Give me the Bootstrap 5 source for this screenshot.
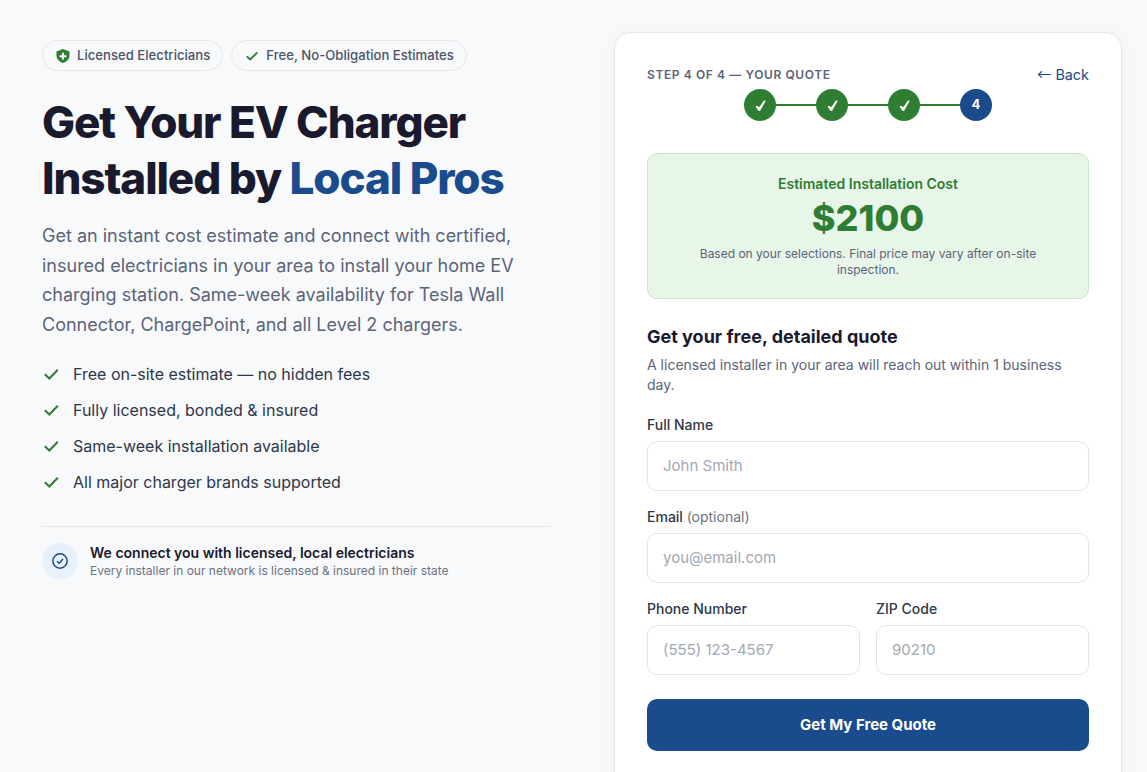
<!DOCTYPE html>
<html lang="en">

<head>
    <meta charset="UTF-8">
    <meta name="viewport" content="width=device-width, initial-scale=1.0">
    <title>EV Charger Installation Quote</title>
    <link rel="stylesheet" href="https://cdn.jsdelivr.net/npm/bootstrap@5.3.0/dist/css/bootstrap.min.css">
    <style>
        body {
            font-family: Inter, "Liberation Sans", sans-serif;
            background: #f8f9fb;
            color: #1a1a2e;
            height: 772px;
            overflow: hidden;
        }

        .page-wrap {
            display: grid;
            grid-template-columns: 508px 508px;
            gap: 64px;
            padding: 32px 25px 0 42px;
            align-items: start;
        }

        .left-col {
            padding-top: 8px;
        }

        .trust-pill {
            display: inline-flex;
            align-items: center;
            gap: 6px;
            height: 31px;
            padding: 0 12px;
            background: #f8f9fb;
            border: 1px solid #e5e7eb;
            border-radius: 16px;
            font-size: 13.12px;
            font-weight: 500;
            letter-spacing: .015px;
            color: #4a5568;
        }

        .hero-title {
            margin: 23px 0 15px;
            font-size: 44px;
            font-weight: 800;
            line-height: 56px;
            letter-spacing: -1.1px;
            color: #1a1a2e;
        }

        .hero-title span {
            color: #1a4b8c;
        }

        .hero-text {
            margin-bottom: 22px;
            font-size: 18px;
            line-height: 29.7px;
            color: #5a6478;
        }

        .check-list {
            gap: 12px;
            margin-bottom: 32px;
            font-size: 16px;
            line-height: 24px;
            color: #2d3748;
        }

        .check-list li {
            gap: 13px;
        }

        .network-row {
            gap: 12px;
            padding-top: 16px;
            border-top: 1px solid #e5e7eb;
        }

        .network-icon {
            width: 36px;
            height: 36px;
            border-radius: 50%;
            background: #e8f0fb;
        }

        .network-title {
            font-size: 14px;
            font-weight: 600;
            line-height: 18px;
            color: #1a1a2e;
        }

        .network-sub {
            margin-top: 1px;
            font-size: 12px;
            line-height: 15px;
            color: #6b7280;
        }

        .quote-card {
            height: 760px;
            padding: 32px;
            background: #fff;
            border: 1px solid #e5e7eb;
            border-radius: 16px;
            box-shadow: 0 4px 24px rgba(0, 0, 0, .04);
        }

        .step-label {
            font-size: 12px;
            font-weight: 600;
            letter-spacing: .6px;
            line-height: 20px;
            color: #5a6478;
        }

        .back-link {
            font-size: 14.4px;
            line-height: 20px;
            color: #1a4b8c;
            text-decoration: none;
        }

        .back-arrow {
            font-family: "Noto Sans CJK JP", sans-serif;
            line-height: 1;
        }

        .stepper {
            margin-top: 4px;
            margin-bottom: 32px;
        }

        .step-dot {
            width: 32px;
            height: 32px;
            border-radius: 50%;
            background: #2e7d32;
            color: #fff;
            font-size: 13px;
            font-weight: 700;
        }

        .step-dot.is-current {
            background: #1a4b8c;
        }

        .step-line {
            width: 40px;
            height: 2px;
            background: #2e7d32;
        }

        .cost-box {
            height: 146px;
            padding: 21px 24px 0;
            margin-bottom: 26px;
            background: #e8f5e9;
            border: 1px solid #c8e6c9;
            border-radius: 10px;
            text-align: center;
        }

        .cost-label {
            margin-bottom: 4px;
            font-size: 14px;
            font-weight: 600;
            line-height: 17px;
            color: #2e7d32;
        }

        .cost-value {
            font-size: 36px;
            font-weight: 800;
            line-height: 44px;
            color: #2e7d32;
        }

        .cost-note {
            margin-top: 6px;
            font-size: 12px;
            line-height: 16px;
            color: #5a6478;
        }

        .form-title {
            margin-bottom: 6px;
            font-size: 18px;
            font-weight: 700;
            line-height: 24px;
            color: #1a1a2e;
        }

        .form-sub {
            margin-bottom: 17px;
            font-size: 14px;
            line-height: 20px;
            color: #5a6478;
        }

        .quote-card .form-label {
            margin-bottom: 6px;
            font-size: 14px;
            font-weight: 500;
            line-height: 20px;
            color: #2d3748;
        }

        .form-label .opt {
            font-weight: 400;
            color: #6b7280;
        }

        .quote-card .form-control {
            height: 50px;
            padding: 0 15px 2px;
            font-size: 15px;
            border: 1px solid #e2e5e9;
            border-radius: 10px;
        }

        .quote-card .form-control::placeholder {
            color: #a3a8b2;
        }

        .field-gap {
            margin-bottom: 13px;
        }

        .field-pair {
            display: grid;
            grid-template-columns: 1fr 1fr;
            gap: 16px;
            margin-bottom: 24px;
        }

        .field-pair .zip-cell {
            width: 213px;
            margin-left: auto;
        }

        .quote-btn {
            height: 52px;
            font-size: 15px;
            font-weight: 700;
            color: #fff;
            background: #1a4b8c;
            border: 0;
            border-radius: 10px;
        }
    </style>
</head>

<body>
    <main class="page-wrap">
        <section class="left-col">
            <div class="d-flex gap-2">
                <span class="trust-pill">
                    <svg width="16" height="16" viewBox="0 0 16 16" aria-hidden="true">
                        <path fill="#2e7d32" d="M8 1 1.500 3.400v4c0 3.400 2.700 6.300 6.500 7.600 3.800-1.300 6.500-4.200 6.500-7.600v-4z"/>
                        <path fill="#fff" d="M7 4.800h2v2.400h2.400v2H9v2.400H7V9.200H4.600v-2H7z"/>
                    </svg>
                    Licensed Electricians
                </span>
                <span class="trust-pill">
                    <svg width="16" height="16" viewBox="0 0 16 16" fill="none" stroke="#2e7d32" stroke-width="1.800" aria-hidden="true">
                        <path d="m2.800 8.300 3.400 3.200 7-7"/>
                    </svg>
                    Free, No-Obligation Estimates
                </span>
            </div>

            <h1 class="hero-title">Get Your EV Charger<br>Installed by <span>Local Pros</span></h1>

            <p class="hero-text">Get an instant cost estimate and connect with certified, insured electricians in your area to install your home EV charging station. Same-week availability for Tesla Wall Connector, ChargePoint, and all Level 2 chargers.</p>

            <ul class="check-list list-unstyled d-flex flex-column">
                <li class="d-flex align-items-center">
                    <svg width="18" height="18" viewBox="0 0 18 18" fill="none" stroke="#2e7d32" stroke-width="2" aria-hidden="true"><path d="m2.800 9.300 4.500 4.200 8.500-8.800"/></svg>
                    Free on-site estimate — no hidden fees
                </li>
                <li class="d-flex align-items-center">
                    <svg width="18" height="18" viewBox="0 0 18 18" fill="none" stroke="#2e7d32" stroke-width="2" aria-hidden="true"><path d="m2.800 9.300 4.500 4.200 8.500-8.800"/></svg>
                    Fully licensed, bonded &amp; insured
                </li>
                <li class="d-flex align-items-center">
                    <svg width="18" height="18" viewBox="0 0 18 18" fill="none" stroke="#2e7d32" stroke-width="2" aria-hidden="true"><path d="m2.800 9.300 4.500 4.200 8.500-8.800"/></svg>
                    Same-week installation available
                </li>
                <li class="d-flex align-items-center">
                    <svg width="18" height="18" viewBox="0 0 18 18" fill="none" stroke="#2e7d32" stroke-width="2" aria-hidden="true"><path d="m2.800 9.300 4.500 4.200 8.500-8.800"/></svg>
                    All major charger brands supported
                </li>
            </ul>

            <div class="network-row d-flex align-items-center">
                <div class="network-icon d-flex align-items-center justify-content-center flex-shrink-0">
                    <svg width="18" height="18" viewBox="0 0 18 18" fill="none" stroke="#1a4b8c" stroke-width="1.500" aria-hidden="true">
                        <circle cx="9" cy="9" r="7.200"/>
                        <path d="m6 9.200 2.200 2L12 7"/>
                    </svg>
                </div>
                <div>
                    <div class="network-title">We connect you with licensed, local electricians</div>
                    <div class="network-sub">Every installer in our network is licensed &amp; insured in their state</div>
                </div>
            </div>
        </section>

        <section class="quote-card">
            <div class="d-flex justify-content-between align-items-start">
                <div class="step-label">STEP 4 OF 4 — YOUR QUOTE</div>
                <a href="#" class="back-link"><span class="back-arrow">←</span> Back</a>
            </div>

            <div class="stepper d-flex align-items-center justify-content-center">
                <div class="step-dot d-flex align-items-center justify-content-center">
                    <svg width="11" height="11" viewBox="0 0 11 11" fill="#fff" aria-hidden="true"><path d="M.5 6.600 2.600 5.700 4 7.500 9 .4l1.800.4L5.100 10.800H3.300z"/></svg>
                </div>
                <div class="step-line"></div>
                <div class="step-dot d-flex align-items-center justify-content-center">
                    <svg width="11" height="11" viewBox="0 0 11 11" fill="#fff" aria-hidden="true"><path d="M.5 6.600 2.600 5.700 4 7.500 9 .4l1.800.4L5.100 10.800H3.300z"/></svg>
                </div>
                <div class="step-line"></div>
                <div class="step-dot d-flex align-items-center justify-content-center">
                    <svg width="11" height="11" viewBox="0 0 11 11" fill="#fff" aria-hidden="true"><path d="M.5 6.600 2.600 5.700 4 7.500 9 .4l1.800.4L5.100 10.800H3.300z"/></svg>
                </div>
                <div class="step-line"></div>
                <div class="step-dot is-current d-flex align-items-center justify-content-center">4</div>
            </div>

            <div class="cost-box">
                <div class="cost-label">Estimated Installation Cost</div>
                <div class="cost-value">$2100</div>
                <div class="cost-note">Based on your selections. Final price may vary after on-site inspection.</div>
            </div>

            <h2 class="form-title">Get your free, detailed quote</h2>
            <p class="form-sub">A licensed installer in your area will reach out within 1 business day.</p>

            <form>
                <div class="field-gap">
                    <label class="form-label" for="fullName">Full Name</label>
                    <input class="form-control" id="fullName" type="text" placeholder="John Smith">
                </div>
                <div class="field-gap">
                    <label class="form-label" for="email">Email <span class="opt">(optional)</span></label>
                    <input class="form-control" id="email" type="email" placeholder="you@email.com">
                </div>
                <div class="field-pair">
                    <div>
                        <label class="form-label" for="phone">Phone Number</label>
                        <input class="form-control" id="phone" type="tel" placeholder="(555) 123-4567">
                    </div>
                    <div class="zip-cell">
                        <label class="form-label" for="zip">ZIP Code</label>
                        <input class="form-control" id="zip" type="text" placeholder="90210">
                    </div>
                </div>
                <button type="button" class="btn quote-btn w-100">Get My Free Quote</button>
            </form>
        </section>
    </main>

    <script src="https://cdn.jsdelivr.net/npm/bootstrap@5.3.0/dist/js/bootstrap.bundle.min.js"></script>
</body>

</html>
